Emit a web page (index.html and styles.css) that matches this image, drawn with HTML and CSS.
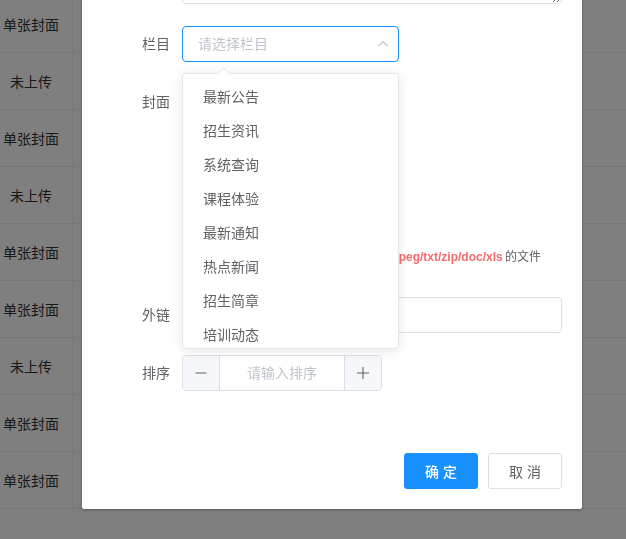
FILE: index.html
```html
<!DOCTYPE html>
<html lang="zh">
<head>
<meta charset="utf-8">
<title>文章编辑</title>
<link rel="stylesheet" href="styles.css">
</head>
<body>
<div class="table">
  <div class="row"><div class="cell">单张封面</div><div class="cell-rest"></div></div>
  <div class="row"><div class="cell">未上传</div><div class="cell-rest"></div></div>
  <div class="row"><div class="cell">单张封面</div><div class="cell-rest"></div></div>
  <div class="row"><div class="cell">未上传</div><div class="cell-rest"></div></div>
  <div class="row"><div class="cell">单张封面</div><div class="cell-rest"></div></div>
  <div class="row"><div class="cell">单张封面</div><div class="cell-rest"></div></div>
  <div class="row"><div class="cell">未上传</div><div class="cell-rest"></div></div>
  <div class="row"><div class="cell">单张封面</div><div class="cell-rest"></div></div>
  <div class="row"><div class="cell">单张封面</div><div class="cell-rest"></div></div>
</div>
<div class="modal"></div>

<div class="dialog">
  <div class="dialog-body">
    <div class="form-item">
      <label class="form-label">摘要</label>
      <div class="form-content"><textarea class="textarea"></textarea></div>
    </div>
    <div class="form-item">
      <label class="form-label">栏目</label>
      <div class="form-content">
        <div class="select is-focus">
          <span class="placeholder">请选择栏目</span>
          <svg class="select-arrow" width="14" height="14" viewBox="0 0 14 14"><polyline points="2.5,9 7,4.5 11.5,9" fill="none" stroke="#c0c4cc" stroke-width="1.2"/></svg>
        </div>
      </div>
    </div>
    <div class="form-item">
      <label class="form-label">封面</label>
      <div class="form-content">
        <div class="picture-card">
          <svg width="28" height="28" viewBox="0 0 28 28"><path d="M14 2v24M2 14h24" stroke="#8c939d" stroke-width="1.5"/></svg>
        </div>
        <div class="upload-tip">请上传 大小不超过 <b>5MB</b> 格式为 <b>png/jpg/jpeg/txt/zip/doc/xls</b> 的文件</div>
      </div>
    </div>
    <div class="form-item">
      <label class="form-label">外链</label>
      <div class="form-content"><div class="input"><span class="placeholder">请输入外链</span></div></div>
    </div>
    <div class="form-item">
      <label class="form-label">排序</label>
      <div class="form-content">
        <div class="number-input">
          <span class="num-btn num-minus"><svg width="14" height="14" viewBox="0 0 14 14"><path d="M1.5 7h11" stroke="#606266" stroke-width="1.1"/></svg></span>
          <span class="num-field">请输入排序</span>
          <span class="num-btn num-plus"><svg width="14" height="14" viewBox="0 0 14 14"><path d="M1 7h12M7 1v12" stroke="#606266" stroke-width="1.1"/></svg></span>
        </div>
      </div>
    </div>
  </div>
  <div class="dialog-footer">
    <button class="btn btn-primary">确 定</button>
    <button class="btn btn-default">取 消</button>
  </div>
</div>

<div class="dropdown">
  <div class="dropdown-arrow"></div>
  <ul class="dropdown-list">
    <li>最新公告</li>
    <li>招生资讯</li>
    <li>系统查询</li>
    <li>课程体验</li>
    <li>最新通知</li>
    <li>热点新闻</li>
    <li>招生简章</li>
    <li>培训动态</li>
  </ul>
</div>
</body>
</html>
```
FILE: styles.css
```css
html, body {
  margin: 0;
  padding: 0;
  width: 626px;
  height: 539px;
  overflow: hidden;
  background: #fff;
  font-family: "Liberation Sans", "Noto Sans CJK SC", sans-serif;
  font-size: 14px;
  color: #606266;
}

.table {
  margin-top: -4px;
}
.row {
  display: flex;
  height: 56px;
  border-bottom: 1px solid #ebeef5;
}
.cell {
  width: 62px;
  padding-right: 10px;
  border-right: 1px solid #ebeef5;
  display: flex;
  align-items: center;
  justify-content: center;
  font-size: 14px;
  color: #333;
  white-space: nowrap;
}
.cell-rest { flex: 1; }

.modal {
  position: fixed;
  inset: 0;
  background: rgba(0, 0, 0, 0.5);
}

.dialog {
  position: absolute;
  left: 82px;
  top: -50px;
  width: 500px;
  background: #fff;
  border-radius: 2px;
  box-shadow: 0 1px 3px rgba(0,0,0,.3);
}
.dialog-body {
  padding: 0 20px 30px;
}
.form-item {
  display: flex;
  margin-bottom: 22px;
}
.form-label {
  width: 80px;
  box-sizing: border-box;
  padding-right: 12px;
  text-align: right;
  line-height: 36px;
  font-size: 14px;
  color: #606266;
  flex-shrink: 0;
}
.form-content {
  flex: 1;
  line-height: 36px;
}
.textarea {
  display: block;
  width: 100%;
  height: 54px;
  box-sizing: border-box;
  border: 1px solid #dcdfe6;
  border-radius: 4px;
  resize: vertical;
  font-family: inherit;
  margin: 0;
}
.select {
  width: 217px;
  height: 36px;
  box-sizing: border-box;
  border: 1px solid #1890ff;
  border-radius: 4px;
  display: flex;
  align-items: center;
  justify-content: space-between;
  padding: 0 8px 0 15px;
}
.placeholder {
  color: #c0c4cc;
  font-size: 14px;
}
.select-arrow { display: block; }

.picture-card {
  width: 148px;
  height: 148px;
  box-sizing: border-box;
  border: 1px dashed #c0ccda;
  border-radius: 6px;
  background: #fbfdff;
  display: flex;
  align-items: center;
  justify-content: center;
}
.upload-tip {
  margin-top: 7px;
  font-size: 12px;
  color: #606266;
  white-space: nowrap;
  word-spacing: -1px;
}
.upload-tip b {
  color: #f56c6c;
}

.input {
  height: 36px;
  box-sizing: border-box;
  border: 1px solid #dcdfe6;
  border-radius: 4px;
  padding: 0 15px;
  display: flex;
  align-items: center;
}

.number-input {
  width: 200px;
  height: 36px;
  box-sizing: border-box;
  border: 1px solid #dcdfe6;
  border-radius: 4px;
  display: flex;
  overflow: hidden;
}
.num-btn {
  width: 36px;
  background: #f5f7fa;
  display: flex;
  align-items: center;
  justify-content: center;
}
.num-minus { border-right: 1px solid #dcdfe6; }
.num-plus { border-left: 1px solid #dcdfe6; }
.num-field {
  flex: 1;
  text-align: center;
  color: #c0c4cc;
  line-height: 34px;
}

.dialog-footer {
  padding: 10px 20px 20px;
  display: flex;
  justify-content: flex-end;
  gap: 10px;
}
.btn {
  width: 74px;
  height: 36px;
  border-radius: 3px;
  font-family: inherit;
  font-size: 14px;
  padding: 0;
  cursor: pointer;
}
.btn-primary {
  background: #1890ff;
  border: 1px solid #1890ff;
  color: #fff;
  font-weight: 500;
}
.btn-default {
  background: #fff;
  border: 1px solid #dcdfe6;
  color: #606266;
}

.dropdown {
  position: absolute;
  left: 182px;
  top: 73px;
  width: 217px;
  height: 276px;
  box-sizing: border-box;
  background: #fff;
  border: 1px solid #e4e7ed;
  border-radius: 4px;
  box-shadow: 0 2px 12px rgba(0,0,0,.1);
}
.dropdown-arrow {
  position: absolute;
  top: -5px;
  left: 36px;
  width: 8px;
  height: 8px;
  background: #fff;
  border-left: 1px solid #e4e7ed;
  border-top: 1px solid #e4e7ed;
  transform: rotate(45deg);
}
.dropdown-list {
  list-style: none;
  margin: 0;
  padding: 6px 0;
  height: 274px;
  box-sizing: border-box;
  overflow: hidden;
}
.dropdown-list li {
  height: 34px;
  line-height: 34px;
  padding: 0 20px;
  font-size: 14px;
  color: #606266;
}
```
